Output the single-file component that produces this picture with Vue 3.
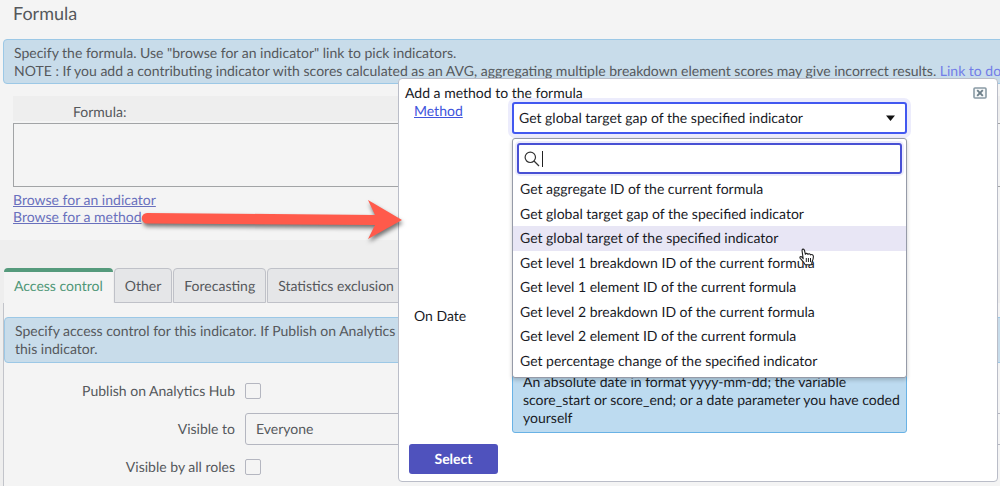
<template>
  <main class="page">
    <section class="formula-section">
      <h1>Formula</h1>
      <div class="info formula-info">
        Specify the formula. Use "browse for an indicator" link to pick indicators.<br />
        NOTE : If you add a contributing indicator with scores calculated as an AVG, aggregating multiple breakdown element scores may give incorrect results.
        <a href="#docs">Link to documentation</a>
      </div>
      <div class="formula-field">
        <label for="formula">Formula:</label>
        <textarea id="formula" v-model="formula"></textarea>
        <a href="#indicator">Browse for an indicator</a>
        <a href="#method" @click.prevent="dialogOpen = true">Browse for a method</a>
      </div>
    </section>

    <nav class="tabs">
      <button v-for="tab in tabs"
              :key="tab"
              type="button"
              :class="{ active: tab === activeTab }"
              @click="activeTab = tab">{{ tab }}</button>
    </nav>

    <section class="tab-panel">
      <div class="info access-info">
        Specify access control for this indicator. If Publish on Analytics Hub<br />
        this indicator.
      </div>
      <div class="access-form">
        <label for="publish">Publish on Analytics Hub</label>
        <input id="publish" v-model="publish" type="checkbox" />
        <label for="visible">Visible to</label>
        <select id="visible" v-model="visibleTo">
          <option>Everyone</option>
          <option>Specific users</option>
        </select>
        <label for="roles">Visible by all roles</label>
        <input id="roles" v-model="allRoles" type="checkbox" />
      </div>
    </section>

    <section v-if="dialogOpen" class="dialog" role="dialog" aria-labelledby="dialog-title">
      <header>
        <h2 id="dialog-title">Add a method to the formula</h2>
        <button type="button" class="close" aria-label="Close" @click="dialogOpen = false">
          <svg width="14" height="12" viewBox="0 0 14 12">
            <rect x="1" y="1" width="12" height="10" rx="1" fill="#f6f8f9" stroke="#8a9ba5" stroke-width="1.6" />
            <path d="M4.2 3.2l5.6 5.6M9.8 3.2L4.2 8.8" stroke="#6d7f89" stroke-width="1.9" />
          </svg>
        </button>
      </header>

      <div class="dialog-form">
        <label for="method" class="method-label"><a href="#method-help">Method</a></label>
        <div class="picker">
          <select id="method" v-model="method">
            <option v-for="item in methods" :key="item">{{ item }}</option>
          </select>
          <svg class="caret" width="9" height="6" viewBox="0 0 9 6"><path d="M0 .5h9L4.500 6z" fill="#111" /></svg>

          <div class="dropdown">
            <div class="search">
              <svg width="16" height="16" viewBox="0 0 16 16" fill="none" stroke="#333" stroke-width="1.2">
                <circle cx="6.3" cy="6.3" r="5.2" />
                <path d="M10 10l5 5" />
              </svg>
              <span class="cursor"></span>
              <input v-model="search" type="text" aria-label="Search methods" />
            </div>
            <ul role="listbox" aria-label="Methods">
              <li v-for="item in filteredMethods"
                  :key="item"
                  role="option"
                  :aria-selected="item === method"
                  :class="{ highlighted: item === highlighted }"
                  @mouseenter="highlighted = item"
                  @click="method = item">{{ item }}</li>
            </ul>
            <svg class="pointer" width="16" height="18" viewBox="0 0 16 18">
              <path d="M4.2 10.8 3.1 3.1C2.8.7 5 .5 5.5 2.5L6.4 6.3C7 5 8.5 5.2 8.9 6.4 9.7 5.3 11.1 5.7 11.4 6.9 12.7 6 14.4 6.8 14.4 8.5 14.5 11.3 13.7 12.5 12.9 14.2L12.7 16.8H6.2C5.5 14.6 3.5 12.8 1.2 10.3.2 9.1 1.8 7.9 3 9.1Z"
                    fill="#fff" stroke="#222" stroke-width="1.1" stroke-linejoin="round" />
              <path d="M7.3 10v4M9.4 10v4M11.5 10v4" stroke="#222" stroke-width="1" />
            </svg>
          </div>
        </div>

        <label for="date" class="date-label">On Date</label>
        <div class="date-field">
          <input id="date" v-model="date" type="text" />
          <p class="hint">An absolute date in format yyyy-mm-dd; the variable score_start or score_end; or a date parameter you have coded yourself</p>
        </div>
      </div>

      <button type="button" class="select-button" @click="dialogOpen = false">Select</button>
    </section>

    <!-- Arrow from the method link to the dialog -->
    <svg class="arrow" width="268" height="50" viewBox="0 0 268 50">
      <path d="M11 18 239 20 232 5 266 25 232 44 239 30 11 28.5A5.2 5.2 0 0 1 11 18Z" fill="#ff5a4b" />
    </svg>
  </main>
</template>

<script setup>
import { computed, ref } from 'vue';

const tabs = ['Access control', 'Other', 'Forecasting', 'Statistics exclusion'];
const methods = [
  'Get aggregate ID of the current formula',
  'Get global target gap of the specified indicator',
  'Get global target of the specified indicator',
  'Get level 1 breakdown ID of the current formula',
  'Get level 1 element ID of the current formula',
  'Get level 2 breakdown ID of the current formula',
  'Get level 2 element ID of the current formula',
  'Get percentage change of the specified indicator',
];

const activeTab = ref(tabs[0]);
const formula = ref('');
const publish = ref(false);
const visibleTo = ref('Everyone');
const allRoles = ref(false);
const dialogOpen = ref(true);
const method = ref(methods[1]);
const highlighted = ref(methods[2]);
const search = ref('');
const date = ref('');

const filteredMethods = computed(() =>
  methods.filter((item) => item.toLowerCase().includes(search.value.toLowerCase()))
);
</script>

<style>
body {
  margin: 0;
  background: #f4f4f4;
}
</style>

<style scoped>
.page {
  position: relative;
  height: 100vh;
  overflow: hidden;
  background: #eee;
  color: #55585c;
  font: 14px/18px Lato, "Liberation Sans", sans-serif;
  text-rendering: geometricPrecision;
}

.page * {
  box-sizing: border-box;
}

button, input, select, textarea {
  font: inherit;
  color: inherit;
  text-rendering: inherit;
}

.formula-section {
  height: 240px;
  background: #f4f4f4;
}

h1 {
  margin: 0;
  padding: 1px 13px 14px;
  font-size: 18px;
  line-height: 24px;
  font-weight: 400;
}

.info {
  border: 1px solid #9cc8e6;
  border-radius: 4px;
  background: #c8dcea;
  padding: 4px 10px;
  white-space: nowrap;
  overflow: hidden;
}

.formula-info {
  margin: 0 -8px 0 3px;
  height: 45px;
}

.formula-info a {
  color: #727de8;
  text-decoration: none;
}

.formula-field {
  display: flex;
  flex-direction: column;
  align-items: flex-start;
  margin: 12px 0 0 13px;
}

.formula-field label {
  align-self: stretch;
  height: 25px;
  padding: 7px 0 0 60px;
  background: #eee;
}

.formula-field textarea {
  align-self: stretch;
  height: 64px;
  margin: 2px -8px 4px 0;
  border: 1px solid #a2a4a6;
  background: transparent;
  resize: none;
}

.formula-field a {
  line-height: 17px;
  color: #6970bd;
}

.tabs {
  display: flex;
  gap: 1px;
  height: 63px;
  padding: 28px 0 0 4px;
}

.tabs button {
  height: 35px;
  padding: 0 10px;
  border: 1px solid #bfc1c8;
  border-radius: 4px 4px 0 0;
  background: #e5e6e8;
  white-space: nowrap;
}

.tabs button.active {
  border: 0;
  border-top: 4px solid #559a7c;
  padding: 0 10px 4px;
  background: #f4f4f4;
  color: #4f9777;
}

.tab-panel {
  height: 100%;
  margin-left: 3px;
  padding-top: 14px;
  border-left: 1px solid #c2c4ca;
  background: #f4f4f4;
}

.access-info {
  margin-right: -8px;
  height: 46px;
}

.access-form {
  display: grid;
  grid-template-columns: 231px 1fr;
  grid-template-rows: 32px 32px 32px;
  gap: 6px 10px;
  align-items: center;
  padding-top: 12px;
}

.access-form label {
  text-align: right;
}

.access-form input {
  appearance: none;
  width: 16px;
  height: 16px;
  margin: 0;
  border: 1px solid #b4b6c0;
  border-radius: 2px;
}

.access-form select {
  appearance: none;
  height: 32px;
  margin-right: -8px;
  padding: 0 10px;
  border: 1px solid #b4b6c0;
  border-radius: 3px;
  background: #f4f4f4;
}

.dialog {
  position: absolute;
  top: 78px;
  left: 398px;
  right: 2px;
  height: 404px;
  border: 1px solid #babdc8;
  border-radius: 4px;
  background: #fff;
  color: #181a1f;
}

.dialog header {
  display: flex;
  justify-content: space-between;
  height: 23px;
  padding: 5px 10px 0 6px;
}

h2 {
  margin: 0;
  font: inherit;
}

.close {
  height: 20px;
  padding: 0;
  border: 0;
  background: none;
}

.dialog-form {
  display: grid;
  grid-template-columns: 98px minmax(0, 395px);
  grid-template-rows: 198px auto;
  padding-left: 15px;
}

.method-label a {
  color: #4054dc;
}

.picker {
  position: relative;
}

.picker > select {
  appearance: none;
  width: 100%;
  height: 32px;
  padding: 0 5px;
  border: 2px solid #4258f0;
  border-radius: 3px;
  background: #fff;
  box-shadow: 0 0 0 4px #ececfc;
}

.caret {
  position: absolute;
  top: 13px;
  right: 12px;
}

.dropdown {
  position: absolute;
  z-index: 1;
  top: 36px;
  left: 0;
  right: 0;
  padding: 4px 0;
  border: 1px solid #969ba8;
  border-radius: 3px;
  background: #fff;
  box-shadow: 0 2px 4px #0003;
}

.search {
  display: flex;
  align-items: center;
  height: 31px;
  margin: 0 4px 3px;
  padding-left: 5px;
  border: 2px solid #4850d4;
  border-radius: 3px;
  box-shadow: 0 0 0 2px #ececfc;
}

.cursor {
  width: 1px;
  height: 16px;
  margin-left: 2px;
  background: #222;
}

.search input {
  flex: 1;
  min-width: 0;
  border: 0;
  outline: 0;
  background: none;
}

ul {
  display: grid;
  height: 196px;
  margin: 0;
  padding: 0;
  list-style: none;
}

li {
  padding: 0 7px;
  line-height: 24px;
}

li.highlighted {
  background: #e8e6f5;
}

.pointer {
  position: absolute;
  top: 109px;
  left: 286px;
}

.date-label {
  padding-top: 7px;
}

.date-field input {
  width: 100%;
  height: 32px;
  border: 1px solid #babdc8;
  border-radius: 3px;
}

.hint {
  margin: 33px 0 11px;
  padding: 7px 4px 5px 10px;
  border: 1px solid #69b2e5;
  border-radius: 3px;
  background: #bddbf0;
}

.select-button {
  width: 89px;
  height: 30px;
  margin-left: 10px;
  border: 0;
  border-radius: 3px;
  background: #4f52bd;
  color: #fff;
  font-weight: 700;
}

.arrow {
  position: absolute;
  top: 195px;
  left: 136px;
  filter: drop-shadow(1px 3px 2px #0008);
  pointer-events: none;
}
</style>
